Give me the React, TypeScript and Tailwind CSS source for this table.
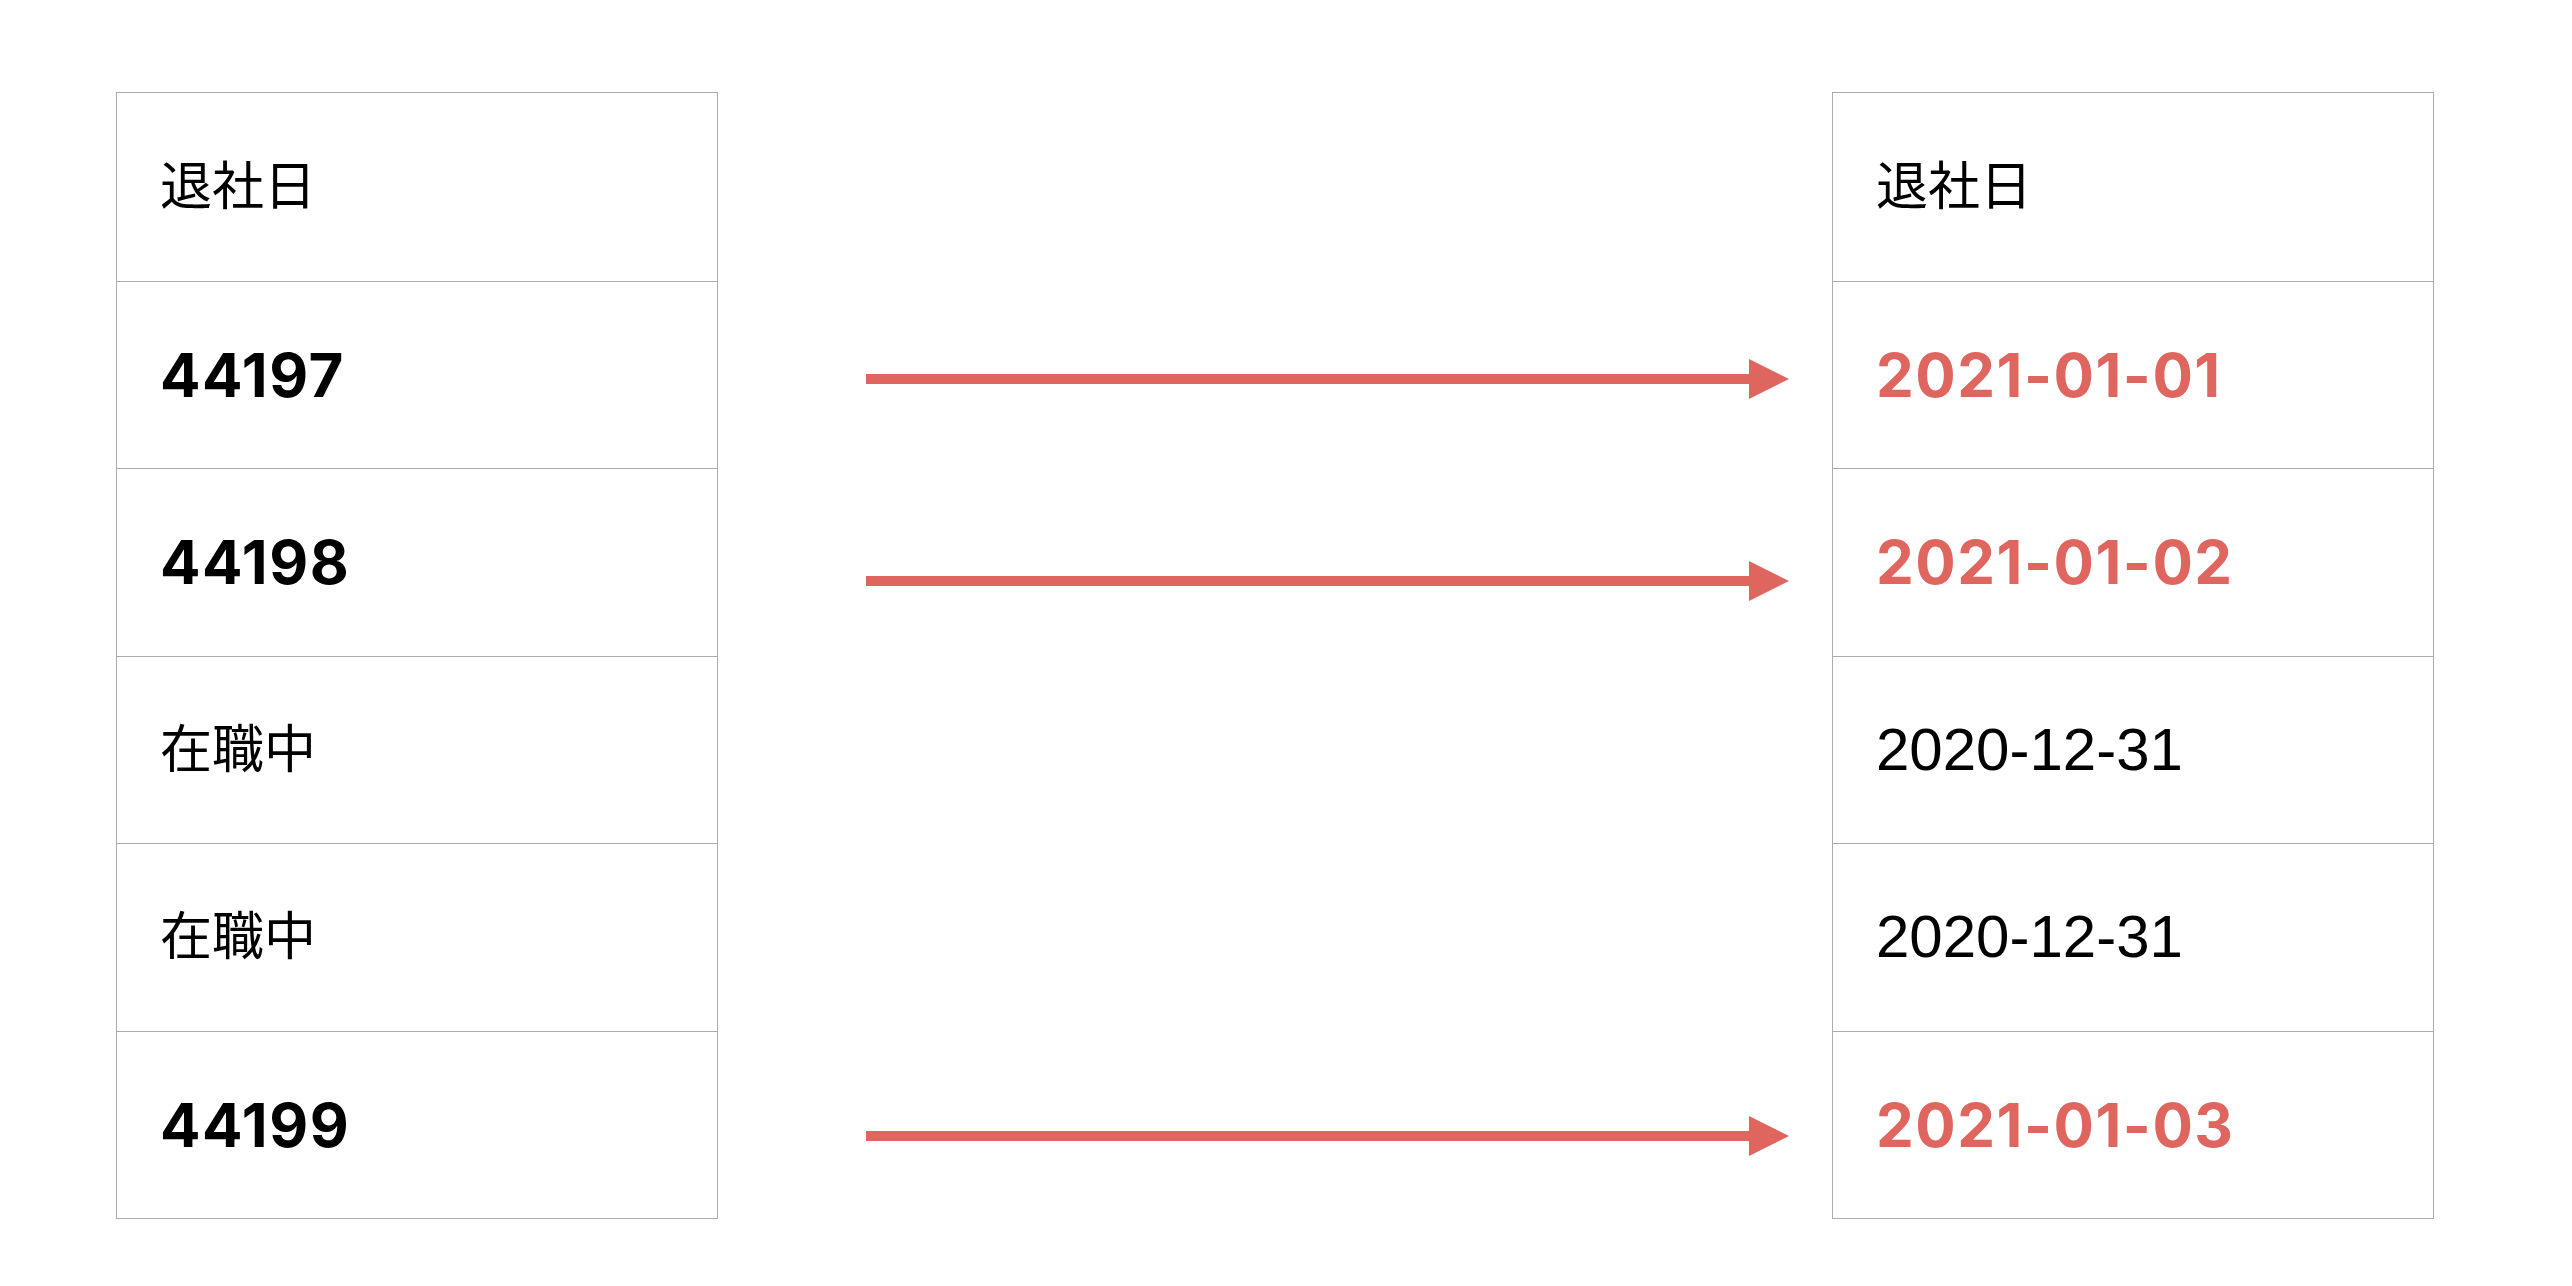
import type { ReactNode } from 'react';

type Celda = { texto: string; tipo: 'kanji' | 'numero' | 'fecha' | 'cambio' };

const ANTES: Celda[] = [
  { texto: '退社日', tipo: 'kanji' },
  { texto: '44197', tipo: 'numero' },
  { texto: '44198', tipo: 'numero' },
  { texto: '在職中', tipo: 'kanji' },
  { texto: '在職中', tipo: 'kanji' },
  { texto: '44199', tipo: 'numero' },
];

const DESPUES: Celda[] = [
  { texto: '退社日', tipo: 'kanji' },
  { texto: '2021-01-01', tipo: 'cambio' },
  { texto: '2021-01-02', tipo: 'cambio' },
  { texto: '2020-12-31', tipo: 'fecha' },
  { texto: '2020-12-31', tipo: 'fecha' },
  { texto: '2021-01-03', tipo: 'cambio' },
];

// desplazamiento vertical de cada flecha respecto al centro de su fila
const FLECHAS: (string | null)[] = [null, 'pt-[10px]', 'pt-[38px]', null, null, 'pt-[24px]'];

const ESTILO: Record<Celda['tipo'], string> = {
  kanji: 'text-[52px] text-black',
  numero: "font-['Inter',sans-serif] text-[60px] font-bold tracking-[1.5px] text-black",
  fecha: 'text-[60px] text-black',
  cambio: "font-['Inter',sans-serif] text-[60px] font-bold tracking-[1.5px] text-[#df665e]",
};

function Tabla({ filas }: { filas: Celda[] }) {
  return (
    <div className="flex w-[602px] flex-col border border-[#ababab]">
      {filas.map((fila, i) => (
        <div
          key={i}
          className={`flex h-[187.5px] items-center pl-[43px] ${i > 0 ? 'border-t border-[#ababab]' : ''}`}
        >
          <span className={`leading-none ${ESTILO[fila.tipo]}`}>{fila.texto}</span>
        </div>
      ))}
    </div>
  );
}

function Flecha() {
  return (
    <svg width="923" height="40" viewBox="0 0 923 40" className="block">
      <rect x="0" y="15" width="884" height="10" fill="#df665e" />
      <polygon points="883,0 923,20 883,40" fill="#df665e" />
    </svg>
  );
}

function Fila({ children, clase }: { children?: ReactNode; clase: string }) {
  return <div className={`flex h-[187.5px] items-center ${clase}`}>{children}</div>;
}

export default function App() {
  return (
    <div
      className="flex h-[1286px] w-[2572px] items-start bg-white pl-[116px] pt-[92px]"
      style={{ fontFamily: '"Liberation Sans", "Noto Sans CJK JP", sans-serif' }}
    >
      <Tabla filas={ANTES} />

      <div className="flex w-[1114px] flex-col pl-[148px] pt-px">
        {FLECHAS.map((offset, i) => (
          <Fila key={i} clase={offset ?? ''}>
            {offset ? <Flecha /> : null}
          </Fila>
        ))}
      </div>

      <Tabla filas={DESPUES} />
    </div>
  );
}
